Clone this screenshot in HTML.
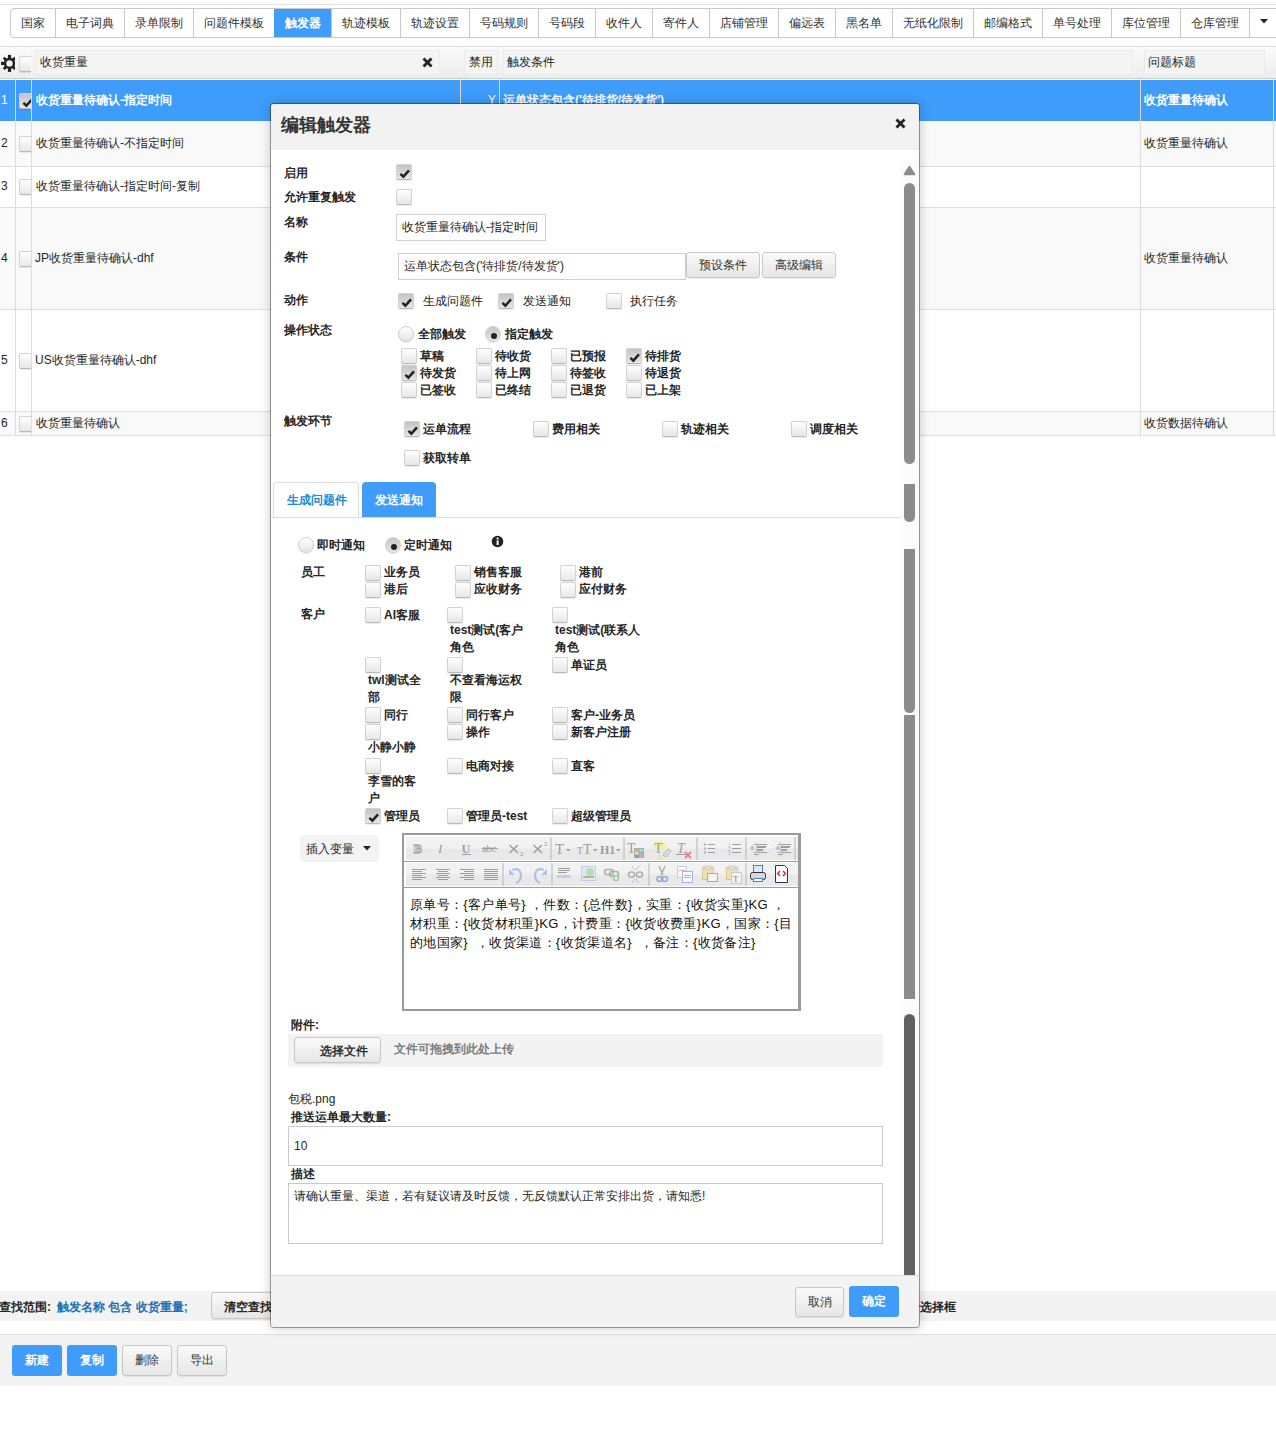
<!DOCTYPE html><html><head><meta charset="utf-8"><style>
*{box-sizing:border-box}
html,body{margin:0;padding:0;width:1276px;height:1440px;overflow:hidden;background:#fff;font-family:"Liberation Sans",sans-serif;font-size:12px;color:#262626}
.a{position:absolute}
.t{position:absolute;white-space:nowrap;line-height:14px}
.b{font-weight:bold}
.topline{left:0;top:4px;width:1276px;height:1px;background:#e3e3e3}
.tabs{left:10px;top:8px;height:30px;width:1300px;border:1px solid #c8c8c8;border-radius:4px;background:#fff;white-space:nowrap;overflow:hidden}
.tabs span{display:inline-block;height:28px;line-height:28px;padding:0 10px;border-left:1px solid #c8c8c8;vertical-align:top;color:#333}
.tabs span:first-child{border-left:0}
.tabs span.on{background:#3f9cfa;color:#fff;font-weight:bold;border-left-color:#3f9cfa}
.hdr{left:0;top:46px;width:1276px;height:33px;background:#f4f4f4;border-top:1px solid #e0e0e0;border-bottom:1px solid #cfcfcf}
.hc{top:47px;height:31px;background:linear-gradient(#fbfbfb,#ececec)}
.ib{top:50px;height:25px;background:#f4f4f4;border:1px solid #ebebeb}
.vl{position:absolute;width:1px;background:#dcdcdc}
.row{position:absolute;left:0;width:1276px;border-bottom:1px solid #dedede}
.cb{position:absolute;width:16px;height:16px;border:1px solid #d2d2d2;border-bottom-color:#b9b9b9;border-radius:2px;background:linear-gradient(#fefefe,#e7e7e7);box-shadow:0 1px 1px rgba(0,0,0,.08)}
.ck{background:linear-gradient(#c4c4c4,#e6e6e6)}
.rd{position:absolute;width:16px;height:16px;border:1px solid #cfcfcf;border-radius:50%;background:linear-gradient(#fdfdfd,#e6e6e6);box-shadow:0 1px 1px rgba(0,0,0,.1)}
.rd.on{background:linear-gradient(#c6c6c6,#e6e6e6)}
.rd.on::after{content:"";position:absolute;left:5px;top:6px;width:6px;height:6px;border-radius:50%;background:#222}
.btn{position:absolute;border:1px solid #c8c8c8;border-radius:3px;background:linear-gradient(#fafafa,#e6e6e6);text-align:center;color:#333;box-shadow:0 1px 1px rgba(0,0,0,.08)}
.bb{position:absolute;border-radius:3px;background:#3f9cfa;color:#fff;font-weight:bold;text-align:center}
.inp{position:absolute;border:1px solid #cfcfcf;background:#fff}
</style></head><body>
<div class="a topline"></div>
<div class="a tabs"><span>国家</span><span>电子词典</span><span>录单限制</span><span>问题件模板</span><span class=on>触发器</span><span>轨迹模板</span><span>轨迹设置</span><span>号码规则</span><span>号码段</span><span>收件人</span><span>寄件人</span><span>店铺管理</span><span>偏远表</span><span>黑名单</span><span>无纸化限制</span><span>邮编格式</span><span>单号处理</span><span>库位管理</span><span>仓库管理</span><span style="width:40px;position:relative"><svg width="10" height="6" style="position:absolute;left:10px;top:10px"><polygon points="0,0 8,0 4,4.5" fill="#222"/></svg></span></div>
<div class="a hdr"></div>
<div class="a hc" style="left:0px;width:15px"></div>
<div class="a hc" style="left:16px;width:15px"></div>
<div class="a hc" style="left:32px;width:428px"></div>
<div class="a hc" style="left:461px;width:38px"></div>
<div class="a hc" style="left:500px;width:640px"></div>
<div class="a hc" style="left:1141px;width:132px"></div>
<div class="a hc" style="left:1274px;width:10px"></div>
<div class="a ib" style="left:35px;width:405px"></div>
<div class="a ib" style="left:464px;width:34px"></div>
<div class="a ib" style="left:503px;width:630px"></div>
<div class="a ib" style="left:1144px;width:121px"></div>
<div class="t " style="left:40px;top:55px;">收货重量</div>
<svg class="a" style="left:422px;top:57px" width="11" height="11"><path d="M1.5,1.5 L9.5,9.5 M9.5,1.5 L1.5,9.5" stroke="#222" stroke-width="2.8"/></svg>
<div class="t " style="left:469px;top:55px;">禁用</div>
<div class="t " style="left:507px;top:55px;">触发条件</div>
<div class="t " style="left:1148px;top:55px;">问题标题</div>
<div class="a" style="left:0;top:52px;width:15px;height:22px;overflow:hidden"><svg width="20" height="22" style="position:absolute;left:0;top:0"><g fill="#222" transform="translate(9.5 11.4)"><rect x="-5.2" y="-5.2" width="10.4" height="10.4" rx="0.8"/><rect x="-1.3" y="-8.2" width="2.6" height="16.4" transform="rotate(45)"/><rect x="-1.3" y="-8.2" width="2.6" height="16.4" transform="rotate(-45)"/><rect x="-1.6" y="-8.5" width="3.2" height="17"/><rect x="-8.5" y="-1.6" width="17" height="3.2"/></g><circle cx="9.5" cy="11.4" r="3.2" fill="#f2f2f2"/></svg></div>
<div class="a" style="left:16px;top:50px;width:15px;height:30px;overflow:hidden"><div class="cb" style="left:3px;top:6px;"></div></div>
<div class="row" style="top:80px;height:41px;background:#3f9cfa;border-bottom:0;"></div>
<div class="row" style="top:121px;height:46px;background:#f9f9f9;"></div>
<div class="row" style="top:167px;height:41px;background:#fff;"></div>
<div class="row" style="top:208px;height:102px;background:#f9f9f9;"></div>
<div class="row" style="top:310px;height:102px;background:#fff;"></div>
<div class="row" style="top:412px;height:24px;background:#f9f9f9;"></div>
<div class="vl" style="left:15px;top:79px;height:357px"></div>
<div class="vl" style="left:31px;top:79px;height:357px"></div>
<div class="vl" style="left:460px;top:79px;height:357px"></div>
<div class="vl" style="left:499px;top:79px;height:357px"></div>
<div class="vl" style="left:1140px;top:79px;height:357px"></div>
<div class="vl" style="left:1273px;top:79px;height:357px"></div>
<div class="t " style="left:1px;top:93px;color:#fff;">1</div>
<div class="a" style="left:16px;top:91px;width:15px;height:20px;overflow:hidden"><div class="cb ck" style="left:3px;top:2px;"><svg width="16" height="16" style="position:absolute;left:-1px;top:-1px"><polyline points="4.4,9.8 7.4,12.6 13.0,6.4" fill="none" stroke="#222" stroke-width="2.5"/></svg></div></div>
<div class="t b" style="left:36px;top:93px;color:#fff;">收货重量待确认-指定时间</div>
<div class="t b" style="left:1144px;top:93px;color:#fff;">收货重量待确认</div>
<div class="t " style="left:1px;top:136px;">2</div>
<div class="a" style="left:16px;top:134px;width:15px;height:20px;overflow:hidden"><div class="cb" style="left:3px;top:2px;"></div></div>
<div class="t " style="left:36px;top:136px;">收货重量待确认-不指定时间</div>
<div class="t " style="left:1144px;top:136px;">收货重量待确认</div>
<div class="t " style="left:1px;top:179px;">3</div>
<div class="a" style="left:16px;top:177px;width:15px;height:20px;overflow:hidden"><div class="cb" style="left:3px;top:2px;"></div></div>
<div class="t " style="left:36px;top:179px;">收货重量待确认-指定时间-复制</div>
<div class="t " style="left:1px;top:251px;">4</div>
<div class="a" style="left:16px;top:249px;width:15px;height:20px;overflow:hidden"><div class="cb" style="left:3px;top:2px;"></div></div>
<div class="t " style="left:35px;top:251px;">JP收货重量待确认-dhf</div>
<div class="t " style="left:1144px;top:251px;">收货重量待确认</div>
<div class="t " style="left:1px;top:353px;">5</div>
<div class="a" style="left:16px;top:351px;width:15px;height:20px;overflow:hidden"><div class="cb" style="left:3px;top:2px;"></div></div>
<div class="t " style="left:35px;top:353px;">US收货重量待确认-dhf</div>
<div class="t " style="left:1px;top:416px;">6</div>
<div class="a" style="left:16px;top:414px;width:15px;height:20px;overflow:hidden"><div class="cb" style="left:3px;top:2px;"></div></div>
<div class="t " style="left:36px;top:416px;">收货重量待确认</div>
<div class="t " style="left:1144px;top:416px;">收货数据待确认</div>
<div class="t " style="left:488px;top:93px;color:#fff">Y</div>
<div class="t b" style="left:503px;top:93px;color:#fff">运单状态包含('待排货/待发货')</div>
<div class="a" style="left:0;top:1291px;width:1276px;height:30px;background:#f3f3f3"></div>
<div class="t b" style="left:-1px;top:1300px;">查找范围:</div>
<div class="t b" style="left:57px;top:1300px;color:#1b6fb5">触发名称 包含 收货重量;</div>
<div class="btn" style="left:211px;top:1292px;width:80px;height:27px"></div>
<div class="t b" style="left:224px;top:1300px;">清空查找</div>
<div class="t b" style="left:908px;top:1300px;">个选择框</div>
<div class="a" style="left:0;top:1334px;width:1276px;height:52px;background:#f3f3f3;border-top:1px solid #e0e0e0"></div>
<div class="bb" style="left:12px;top:1345px;width:50px;height:31px;line-height:31px">新建</div>
<div class="bb" style="left:67px;top:1345px;width:50px;height:31px;line-height:31px">复制</div>
<div class="btn" style="left:122px;top:1345px;width:50px;height:31px;line-height:29px">删除</div>
<div class="btn" style="left:177px;top:1345px;width:50px;height:31px;line-height:29px">导出</div>
<div class="a" style="left:270px;top:103px;width:650px;height:1225px;background:#fff;border:1px solid rgba(0,0,0,.36);background-clip:padding-box;border-radius:4px;box-shadow:0 0 12px rgba(0,0,0,.2);overflow:hidden">
<div class="a" style="left:0;top:0;width:100%;height:46px;background:#f2f2f2"></div>
<div class="a" style="left:0;top:1171px;width:100%;height:54px;background:#f3f3f3;border-top:1px solid #dcdcdc"></div>
</div>
<div class="t b" style="left:281px;top:115px;font-size:18px;line-height:20px;color:#333">编辑触发器</div>
<svg class="a" style="left:895px;top:118px" width="11" height="11"><path d="M1.5,1.5 L9.5,9.5 M9.5,1.5 L1.5,9.5" stroke="#222" stroke-width="2.8"/></svg>
<div class="a" style="left:271px;top:150px;width:648px;height:1125px;overflow:hidden"><div class="a" style="left:-271px;top:-150px;width:1276px;height:1440px">
<div class="t b" style="left:284px;top:166px;">启用</div>
<div class="t b" style="left:284px;top:190px;">允许重复触发</div>
<div class="t b" style="left:284px;top:215px;">名称</div>
<div class="t b" style="left:284px;top:250px;">条件</div>
<div class="t b" style="left:284px;top:293px;">动作</div>
<div class="t b" style="left:284px;top:323px;">操作状态</div>
<div class="t b" style="left:284px;top:414px;">触发环节</div>
<div class="cb ck" style="left:396px;top:164px;"><svg width="16" height="16" style="position:absolute;left:-1px;top:-1px"><polyline points="4.4,9.8 7.4,12.6 13.0,6.4" fill="none" stroke="#222" stroke-width="2.5"/></svg></div>
<div class="cb" style="left:396px;top:189px;"></div>
<div class="inp" style="left:396px;top:214px;width:150px;height:27px"></div>
<div class="t " style="left:402px;top:220px;">收货重量待确认-指定时间</div>
<div class="inp" style="left:398px;top:253px;width:288px;height:27px"></div>
<div class="t " style="left:404px;top:259px;">运单状态包含('待排货/待发货')</div>
<div class="btn" style="left:686px;top:252px;width:74px;height:26px;line-height:24px">预设条件</div>
<div class="btn" style="left:762px;top:252px;width:74px;height:26px;line-height:24px">高级编辑</div>
<div class="cb ck" style="left:398px;top:293px;"><svg width="16" height="16" style="position:absolute;left:-1px;top:-1px"><polyline points="4.4,9.8 7.4,12.6 13.0,6.4" fill="none" stroke="#222" stroke-width="2.5"/></svg></div>
<div class="t " style="left:423px;top:294px;">生成问题件</div>
<div class="cb ck" style="left:498px;top:293px;"><svg width="16" height="16" style="position:absolute;left:-1px;top:-1px"><polyline points="4.4,9.8 7.4,12.6 13.0,6.4" fill="none" stroke="#222" stroke-width="2.5"/></svg></div>
<div class="t " style="left:523px;top:294px;">发送通知</div>
<div class="cb" style="left:606px;top:293px;"></div>
<div class="t " style="left:630px;top:294px;">执行任务</div>
<div class="rd" style="left:398px;top:326px"></div>
<div class="t b" style="left:418px;top:327px;">全部触发</div>
<div class="rd on" style="left:485px;top:326px"></div>
<div class="t b" style="left:505px;top:327px;">指定触发</div>
<div class="cb" style="left:401px;top:348px;"></div>
<div class="t b" style="left:420px;top:349px;">草稿</div>
<div class="cb" style="left:476px;top:348px;"></div>
<div class="t b" style="left:495px;top:349px;">待收货</div>
<div class="cb" style="left:551px;top:348px;"></div>
<div class="t b" style="left:570px;top:349px;">已预报</div>
<div class="cb ck" style="left:626px;top:348px;"><svg width="16" height="16" style="position:absolute;left:-1px;top:-1px"><polyline points="4.4,9.8 7.4,12.6 13.0,6.4" fill="none" stroke="#222" stroke-width="2.5"/></svg></div>
<div class="t b" style="left:645px;top:349px;">待排货</div>
<div class="cb ck" style="left:401px;top:365px;"><svg width="16" height="16" style="position:absolute;left:-1px;top:-1px"><polyline points="4.4,9.8 7.4,12.6 13.0,6.4" fill="none" stroke="#222" stroke-width="2.5"/></svg></div>
<div class="t b" style="left:420px;top:366px;">待发货</div>
<div class="cb" style="left:476px;top:365px;"></div>
<div class="t b" style="left:495px;top:366px;">待上网</div>
<div class="cb" style="left:551px;top:365px;"></div>
<div class="t b" style="left:570px;top:366px;">待签收</div>
<div class="cb" style="left:626px;top:365px;"></div>
<div class="t b" style="left:645px;top:366px;">待退货</div>
<div class="cb" style="left:401px;top:382px;"></div>
<div class="t b" style="left:420px;top:383px;">已签收</div>
<div class="cb" style="left:476px;top:382px;"></div>
<div class="t b" style="left:495px;top:383px;">已终结</div>
<div class="cb" style="left:551px;top:382px;"></div>
<div class="t b" style="left:570px;top:383px;">已退货</div>
<div class="cb" style="left:626px;top:382px;"></div>
<div class="t b" style="left:645px;top:383px;">已上架</div>
<div class="cb ck" style="left:404px;top:421px;"><svg width="16" height="16" style="position:absolute;left:-1px;top:-1px"><polyline points="4.4,9.8 7.4,12.6 13.0,6.4" fill="none" stroke="#222" stroke-width="2.5"/></svg></div>
<div class="t b" style="left:423px;top:422px;">运单流程</div>
<div class="cb" style="left:533px;top:421px;"></div>
<div class="t b" style="left:552px;top:422px;">费用相关</div>
<div class="cb" style="left:662px;top:421px;"></div>
<div class="t b" style="left:681px;top:422px;">轨迹相关</div>
<div class="cb" style="left:791px;top:421px;"></div>
<div class="t b" style="left:810px;top:422px;">调度相关</div>
<div class="cb" style="left:404px;top:450px;"></div>
<div class="t b" style="left:423px;top:451px;">获取转单</div>
<div class="a" style="left:273px;top:482px;width:86px;height:36px;border:1px solid #dcdcdc;border-bottom:0;border-radius:4px 4px 0 0;background:#fff"></div>
<div class="t b" style="left:287px;top:493px;color:#1a8bd6">生成问题件</div>
<div class="a" style="left:362px;top:482px;width:74px;height:35px;border-radius:4px 4px 0 0;background:#3f9cfa"></div>
<div class="t b" style="left:375px;top:493px;color:#fff">发送通知</div>
<div class="a" style="left:271px;top:517px;width:629px;height:1px;background:#dcdcdc"></div>
<div class="rd" style="left:298px;top:537px"></div>
<div class="t b" style="left:317px;top:538px;">即时通知</div>
<div class="rd on" style="left:385px;top:537px"></div>
<div class="t b" style="left:404px;top:538px;">定时通知</div>
<svg class="a" style="left:491px;top:535px" width="13" height="13"><circle cx="6.5" cy="6.5" r="5.8" fill="#222"/><rect x="5.6" y="5.4" width="2" height="4.6" fill="#fff"/><rect x="5.6" y="2.6" width="2" height="1.8" fill="#fff"/></svg>
<div class="t b" style="left:301px;top:565px;">员工</div>
<div class="cb" style="left:365px;top:565px;"></div>
<div class="t b" style="left:384px;top:565px;">业务员</div>
<div class="cb" style="left:455px;top:565px;"></div>
<div class="t b" style="left:474px;top:565px;">销售客服</div>
<div class="cb" style="left:560px;top:565px;"></div>
<div class="t b" style="left:579px;top:565px;">港前</div>
<div class="cb" style="left:365px;top:582px;"></div>
<div class="t b" style="left:384px;top:582px;">港后</div>
<div class="cb" style="left:455px;top:582px;"></div>
<div class="t b" style="left:474px;top:582px;">应收财务</div>
<div class="cb" style="left:560px;top:582px;"></div>
<div class="t b" style="left:579px;top:582px;">应付财务</div>
<div class="t b" style="left:301px;top:607px;">客户</div>
<div class="cb" style="left:365px;top:607px;"></div>
<div class="t b" style="left:384px;top:608px;">AI客服</div>
<div class="cb" style="left:447px;top:607px;"></div>
<div class="t b" style="left:450px;top:622px;line-height:17px">test测试(客户<br>角色</div>
<div class="cb" style="left:552px;top:607px;"></div>
<div class="t b" style="left:555px;top:622px;line-height:17px">test测试(联系人<br>角色</div>
<div class="cb" style="left:365px;top:657px;"></div>
<div class="t b" style="left:368px;top:672px;line-height:17px">twl测试全<br>部</div>
<div class="cb" style="left:447px;top:657px;"></div>
<div class="t b" style="left:450px;top:672px;line-height:17px">不查看海运权<br>限</div>
<div class="cb" style="left:552px;top:657px;"></div>
<div class="t b" style="left:571px;top:658px;">单证员</div>
<div class="cb" style="left:365px;top:707px;"></div>
<div class="t b" style="left:384px;top:708px;">同行</div>
<div class="cb" style="left:447px;top:707px;"></div>
<div class="t b" style="left:466px;top:708px;">同行客户</div>
<div class="cb" style="left:552px;top:707px;"></div>
<div class="t b" style="left:571px;top:708px;">客户-业务员</div>
<div class="cb" style="left:365px;top:724px;"></div>
<div class="t b" style="left:368px;top:739px;line-height:17px">小静小静</div>
<div class="cb" style="left:447px;top:724px;"></div>
<div class="t b" style="left:466px;top:725px;">操作</div>
<div class="cb" style="left:552px;top:724px;"></div>
<div class="t b" style="left:571px;top:725px;">新客户注册</div>
<div class="cb" style="left:365px;top:758px;"></div>
<div class="t b" style="left:368px;top:773px;line-height:17px">李雪的客<br>户</div>
<div class="cb" style="left:447px;top:758px;"></div>
<div class="t b" style="left:466px;top:759px;">电商对接</div>
<div class="cb" style="left:552px;top:758px;"></div>
<div class="t b" style="left:571px;top:759px;">直客</div>
<div class="cb ck" style="left:365px;top:808px;"><svg width="16" height="16" style="position:absolute;left:-1px;top:-1px"><polyline points="4.4,9.8 7.4,12.6 13.0,6.4" fill="none" stroke="#222" stroke-width="2.5"/></svg></div>
<div class="t b" style="left:384px;top:809px;">管理员</div>
<div class="cb" style="left:447px;top:808px;"></div>
<div class="t b" style="left:466px;top:809px;">管理员-test</div>
<div class="cb" style="left:552px;top:808px;"></div>
<div class="t b" style="left:571px;top:809px;">超级管理员</div>
<div class="a" style="left:402px;top:833px;width:399px;height:178px;border:2px solid #9a9a9a;border-right-width:3px;background:#fff"></div>
<div class="a" style="left:406px;top:837px;width:392px;height:23px;background:linear-gradient(#f2f2f2 45%,#e9e9e9 55%)"></div>
<div class="a" style="left:404px;top:861px;width:394px;height:1px;background:#9c9c9c"></div>
<div class="a" style="left:406px;top:863px;width:392px;height:23px;background:linear-gradient(#f2f2f2 45%,#e9e9e9 55%)"></div>
<div class="a" style="left:404px;top:887px;width:394px;height:1px;background:#9c9c9c"></div>
<svg class="a" style="left:404px;top:835px" width="396" height="54"><rect x="146.5" y="2" width="1" height="23" fill="#b5b5b5"/><rect x="219.5" y="2" width="1" height="23" fill="#b5b5b5"/><rect x="292.5" y="2" width="1" height="23" fill="#b5b5b5"/><rect x="341.5" y="2" width="1" height="23" fill="#b5b5b5"/><rect x="390.5" y="2" width="1" height="23" fill="#b5b5b5"/><rect x="98.5" y="28" width="1" height="23" fill="#b5b5b5"/><rect x="147.5" y="28" width="1" height="23" fill="#b5b5b5"/><rect x="244.5" y="28" width="1" height="23" fill="#b5b5b5"/><rect x="341.5" y="28" width="1" height="23" fill="#b5b5b5"/><text x="9.5" y="18" font-family="Liberation Serif" font-weight="bold" font-size="13" fill="none" stroke="#9d9d9d" stroke-width="0.9">B</text><text x="34" y="18" font-family="Liberation Serif" font-style="italic" font-size="13" fill="#9d9d9d">I</text><text x="57.5" y="18" font-family="Liberation Serif" font-weight="bold" font-size="12" fill="#9d9d9d">U</text><rect x="58" y="19" width="9" height="1" fill="#9d9d9d"/><text x="78" y="17" font-family="Liberation Serif" font-size="11" fill="#9d9d9d" letter-spacing="-0.5">abc</text><rect x="78" y="13" width="16" height="1" fill="#9d9d9d"/><path d="M105.5,10 L114,18 M114,10 L105.5,18" stroke="#9d9d9d" stroke-width="1.6"/><text x="116" y="21" font-size="6" font-family="Liberation Sans" fill="#7aa2d8">2</text><path d="M129.5,10 L138,18 M138,10 L129.5,18" stroke="#9d9d9d" stroke-width="1.6"/><text x="140" y="11" font-size="6" font-family="Liberation Sans" fill="#7aa2d8">2</text><text x="151" y="19" font-family="Liberation Serif" font-size="15" fill="#9d9d9d">T</text><path d="M162,14 h4.5 l-2.25,2.5z" fill="#9d9d9d"/><text x="173" y="19" font-family="Liberation Serif" font-size="10" fill="#9d9d9d">T</text><text x="179" y="19" font-family="Liberation Serif" font-size="14" fill="#9d9d9d">T</text><path d="M189,14 h4.5 l-2.25,2.5z" fill="#9d9d9d"/><text x="196" y="19" font-family="Liberation Serif" font-weight="bold" font-size="12" fill="#9d9d9d">H1</text><path d="M212,14 h4.5 l-2.25,2.5z" fill="#9d9d9d"/><text x="223" y="18" font-family="Liberation Serif" font-size="14" fill="#9d9d9d">T</text><rect x="230" y="13" width="10" height="10" fill="#aaa"/><rect x="231" y="14" width="3.5" height="2.5" fill="#f4a0a0"/><rect x="235.5" y="14" width="3.5" height="2.5" fill="#8ee8ee"/><rect x="231" y="17" width="3.5" height="2.5" fill="#ecec80"/><rect x="235.5" y="17" width="3.5" height="2.5" fill="#90c890"/><rect x="231" y="20" width="3.5" height="2.5" fill="#9090f0"/><rect x="235.5" y="20" width="3.5" height="2.5" fill="#f090f0"/><ellipse cx="256" cy="11" rx="6" ry="4.5" fill="#f2ee9a"/><text x="250" y="18" font-family="Liberation Serif" font-size="14" fill="#9d9d9d">T</text><path d="M259,20 l5,-6 l3,2 l-5,6z" fill="#ddd" stroke="#aaa" stroke-width="0.8"/><path d="M253,24 l3,-4 l3,4z" fill="#f2ee9a" stroke="#ccc" stroke-width="0.5"/><text x="273" y="18" font-family="Liberation Serif" font-style="italic" font-size="14" fill="#9d9d9d">T</text><rect x="272" y="19" width="10" height="1" fill="#9d9d9d"/><path d="M281,17 l6,6 M287,17 l-6,6" stroke="#f08080" stroke-width="1.8"/><circle cx="301" cy="9.5" r="1.2" fill="#9fb8e0"/><rect x="304" y="9" width="7" height="1" fill="#9d9d9d"/><text x="324" y="12" font-size="5" font-family="Liberation Sans" fill="#9fb8e0">1</text><rect x="328" y="9" width="9" height="1" fill="#9d9d9d"/><circle cx="301" cy="13.5" r="1.2" fill="#9fb8e0"/><rect x="304" y="13" width="7" height="1" fill="#9d9d9d"/><text x="324" y="16" font-size="5" font-family="Liberation Sans" fill="#9fb8e0">2</text><rect x="328" y="13" width="9" height="1" fill="#9d9d9d"/><circle cx="301" cy="17.5" r="1.2" fill="#9fb8e0"/><rect x="304" y="17" width="7" height="1" fill="#9d9d9d"/><text x="324" y="20" font-size="5" font-family="Liberation Sans" fill="#9fb8e0">3</text><rect x="328" y="17" width="9" height="1" fill="#9d9d9d"/><rect x="350" y="9" width="2" height="1" fill="#9d9d9d"/><rect x="353" y="9" width="10" height="1" fill="#9d9d9d"/><rect x="353" y="11" width="9" height="2" fill="#9d9d9d"/><rect x="353" y="14" width="6" height="2" fill="#9d9d9d"/><rect x="353" y="17" width="10" height="1" fill="#9d9d9d"/><rect x="350" y="17" width="2" height="1" fill="#9d9d9d"/><rect x="350" y="19" width="2" height="1" fill="#9d9d9d"/><rect x="353" y="19" width="2" height="1" fill="#9d9d9d"/><rect x="352" y="7" width="1" height="15" fill="#ccc"/><path d="M351,13 l-4,0 l2,-2 M347,13 l2,2" stroke="#9fb8e0" stroke-width="1.2" fill="none"/><rect x="374" y="9" width="2" height="1" fill="#9d9d9d"/><rect x="377" y="9" width="10" height="1" fill="#9d9d9d"/><rect x="377" y="11" width="9" height="2" fill="#9d9d9d"/><rect x="377" y="14" width="6" height="2" fill="#9d9d9d"/><rect x="377" y="17" width="10" height="1" fill="#9d9d9d"/><rect x="374" y="17" width="2" height="1" fill="#9d9d9d"/><rect x="374" y="19" width="2" height="1" fill="#9d9d9d"/><rect x="377" y="19" width="2" height="1" fill="#9d9d9d"/><rect x="376" y="7" width="1" height="15" fill="#ccc"/><path d="M371,13 l4,0 l-2,-2 M375,13 l-2,2" stroke="#9fb8e0" stroke-width="1.2" fill="none"/><rect x="8" y="34" width="14" height="1" fill="#9d9d9d"/><rect x="8" y="36" width="10" height="1" fill="#9d9d9d"/><rect x="8" y="38" width="14" height="1" fill="#9d9d9d"/><rect x="8" y="40" width="10" height="1" fill="#9d9d9d"/><rect x="8" y="42" width="14" height="1" fill="#9d9d9d"/><rect x="8" y="44" width="10" height="1" fill="#9d9d9d"/><rect x="32" y="34" width="14" height="1" fill="#9d9d9d"/><rect x="34" y="36" width="10" height="1" fill="#9d9d9d"/><rect x="32" y="38" width="14" height="1" fill="#9d9d9d"/><rect x="34" y="40" width="10" height="1" fill="#9d9d9d"/><rect x="32" y="42" width="14" height="1" fill="#9d9d9d"/><rect x="34" y="44" width="10" height="1" fill="#9d9d9d"/><rect x="56" y="34" width="14" height="1" fill="#9d9d9d"/><rect x="60" y="36" width="10" height="1" fill="#9d9d9d"/><rect x="56" y="38" width="14" height="1" fill="#9d9d9d"/><rect x="60" y="40" width="10" height="1" fill="#9d9d9d"/><rect x="56" y="42" width="14" height="1" fill="#9d9d9d"/><rect x="60" y="44" width="10" height="1" fill="#9d9d9d"/><rect x="80" y="34" width="14" height="1" fill="#9d9d9d"/><rect x="80" y="36" width="14" height="1" fill="#9d9d9d"/><rect x="80" y="38" width="14" height="1" fill="#9d9d9d"/><rect x="80" y="40" width="14" height="1" fill="#9d9d9d"/><rect x="80" y="42" width="14" height="1" fill="#9d9d9d"/><rect x="80" y="44" width="14" height="1" fill="#9d9d9d"/><path d="M108,35 Q116,32 117,40 Q117,46 112,48" stroke="#a9c4ea" stroke-width="2.2" fill="none"/><path d="M105,34 l0,6 l6,0z" fill="#a9c4ea"/><path d="M140,35 Q132,32 131,40 Q131,46 136,48" stroke="#a9c4ea" stroke-width="2.2" fill="none"/><path d="M143,34 l0,6 l-6,0z" fill="#a9c4ea"/><rect x="154" y="33" width="12" height="1" fill="#9d9d9d"/><rect x="154" y="35" width="12" height="1" fill="#9d9d9d"/><rect x="154" y="37" width="9" height="1" fill="#9d9d9d"/><rect x="153" y="40" width="14" height="3" fill="#bcd2f0"/><rect x="177.5" y="31.5" width="14" height="14" fill="#dfe9f5" stroke="#bcd0ea"/><circle cx="186" cy="37" r="4" fill="#b9dcb0"/><rect x="179" y="41" width="11" height="2" fill="#c8b080"/><rect x="200.5" y="34.5" width="9" height="5" rx="2.5" fill="none" stroke="#b0b0b0" stroke-width="1.6"/><rect x="205.5" y="36.5" width="9" height="5" rx="2.5" fill="none" stroke="#b0b0b0" stroke-width="1.6"/><circle cx="212" cy="43" r="3.2" fill="#8fd08f"/><path d="M210,43 h4 M212,41 v4" stroke="#fff" stroke-width="1"/><rect x="224.5" y="37" width="6" height="5" rx="2.5" fill="none" stroke="#b0b0b0" stroke-width="1.6"/><rect x="232.5" y="37" width="6" height="5" rx="2.5" fill="none" stroke="#b0b0b0" stroke-width="1.6"/><path d="M228,31 l3,4 M235,31 l-3,4 M228,48 l3,-4 M235,48 l-3,-4" stroke="#a9c4ea" stroke-width="1"/><path d="M255,31 l4,9 M261,31 l-4,9" stroke="#aaa" stroke-width="1.3"/><circle cx="255.5" cy="44" r="2.5" fill="none" stroke="#8fa9d8" stroke-width="1.5"/><circle cx="261" cy="44" r="2.5" fill="none" stroke="#8fa9d8" stroke-width="1.5"/><rect x="273.5" y="31.5" width="9" height="11" fill="#fafafa" stroke="#c5cfe0"/><rect x="275" y="35" width="6" height="1" fill="#f0a0a0"/><rect x="278.5" y="36.5" width="10" height="11" fill="#fafafa" stroke="#9fb8e0"/><rect x="280" y="40" width="7" height="1" fill="#9fb8e0"/><rect x="280" y="42" width="7" height="1" fill="#9fb8e0"/><rect x="298.5" y="32.5" width="11" height="12" fill="#f0e0b0" stroke="#d8c898"/><rect x="301" y="31" width="6" height="3" fill="#e8e8e8" stroke="#bbb" stroke-width="0.6"/><rect x="303.5" y="38.5" width="10" height="8" fill="#f4f4f4" stroke="#aaa"/><rect x="322.5" y="32.5" width="11" height="12" fill="#f0e0b0" stroke="#d8c898"/><rect x="325" y="31" width="6" height="3" fill="#e8e8e8" stroke="#bbb" stroke-width="0.6"/><rect x="327.5" y="37.5" width="10" height="11" fill="#f4f4f4" stroke="#b8cce8"/><text x="329" y="47" font-family="Liberation Serif" font-size="9" fill="#a08060">T</text><rect x="349.5" y="30.5" width="9" height="8" fill="#dde8f8" stroke="#4a7fd0"/><rect x="346.5" y="37.5" width="15" height="7" rx="2" fill="#d8d8d8" stroke="#333"/><rect x="349.5" y="43.5" width="9" height="3" fill="#fff" stroke="#4a7fd0"/><path d="M371.5,30.5 h9 l3,3 v14 h-12z" fill="#fff" stroke="#1f3a60"/><path d="M376,36 l-2.5,2.5 l2.5,2.5 M379,36 l2.5,2.5 l-2.5,2.5" stroke="#e02020" stroke-width="1.3" fill="none"/></svg>
<div class="t" style="left:410px;top:895px;font-size:13px;line-height:19px;color:#111;letter-spacing:0.33px">原单号：{客户单号} ，件数：{总件数}，实重：{收货实重}KG ，<br>材积重：{收货材积重}KG，计费重：{收货收费重}KG，国家：{目<br>的地国家}&nbsp; ，收货渠道：{收货渠道名}&nbsp; ，备注：{收货备注}</div>
<div class="t b" style="left:291px;top:1018px;">附件:</div>
<div class="a" style="left:288px;top:1034px;width:595px;height:33px;background:#f3f3f3"></div>
<div class="btn b" style="left:294px;top:1037px;width:87px;height:26px;line-height:26px;padding-left:12px">选择文件</div>
<div class="t b" style="left:394px;top:1042px;color:#7c7c7c">文件可拖拽到此处上传</div>
<div class="t " style="left:288px;top:1092px;">包税.png</div>
<div class="t b" style="left:291px;top:1110px;">推送运单最大数量:</div>
<div class="inp" style="left:288px;top:1126px;width:595px;height:40px;border-color:#c9c9c9"></div>
<div class="t " style="left:294px;top:1139px;">10</div>
<div class="t b" style="left:291px;top:1167px;">描述</div>
<div class="inp" style="left:288px;top:1183px;width:595px;height:61px;border-color:#c9c9c9"></div>
<div class="t " style="left:294px;top:1189px;">请确认重量、渠道，若有疑议请及时反馈，无反馈默认正常安排出货，请知悉!</div>
<div class="a" style="left:900px;top:160px;width:18px;height:1115px;background:#fbfbfb"></div>
<svg class="a" style="left:903px;top:165px" width="13" height="11"><polygon points="6.5,1.8 11.3,9.3 1.7,9.3" fill="#8c8c8c" stroke="#8c8c8c" stroke-width="2" stroke-linejoin="round"/></svg>
<div class="a" style="left:904px;top:183px;width:11px;height:281px;background:#8c8c8c;border-radius:6px"></div>
<div class="a" style="left:904px;top:484px;width:11px;height:38px;background:#8c8c8c;border-radius:0 0 6px 6px"></div>
<div class="a" style="left:904px;top:549px;width:11px;height:164px;background:#8c8c8c;border-radius:0 0 6px 6px"></div>
<div class="a" style="left:904px;top:715px;width:11px;height:284px;background:#8c8c8c"></div>
<div class="a" style="left:904px;top:1014px;width:11px;height:261px;background:#626262;border-radius:6px 6px 0 0"></div>
</div></div>
<div class="a" style="left:300px;top:835px;width:79px;height:27px;background:#f3f3f3;border-radius:4px"></div>
<div class="t " style="left:306px;top:842px;">插入变量</div>
<svg class="a" style="left:363px;top:846px" width="9" height="6"><polygon points="0,0 8,0 4,4.5" fill="#222"/></svg>
<div class="btn" style="left:795px;top:1287px;width:49px;height:30px;line-height:28px">取消</div>
<div class="bb" style="left:849px;top:1286px;width:50px;height:31px;line-height:31px">确定</div>
</body></html>
